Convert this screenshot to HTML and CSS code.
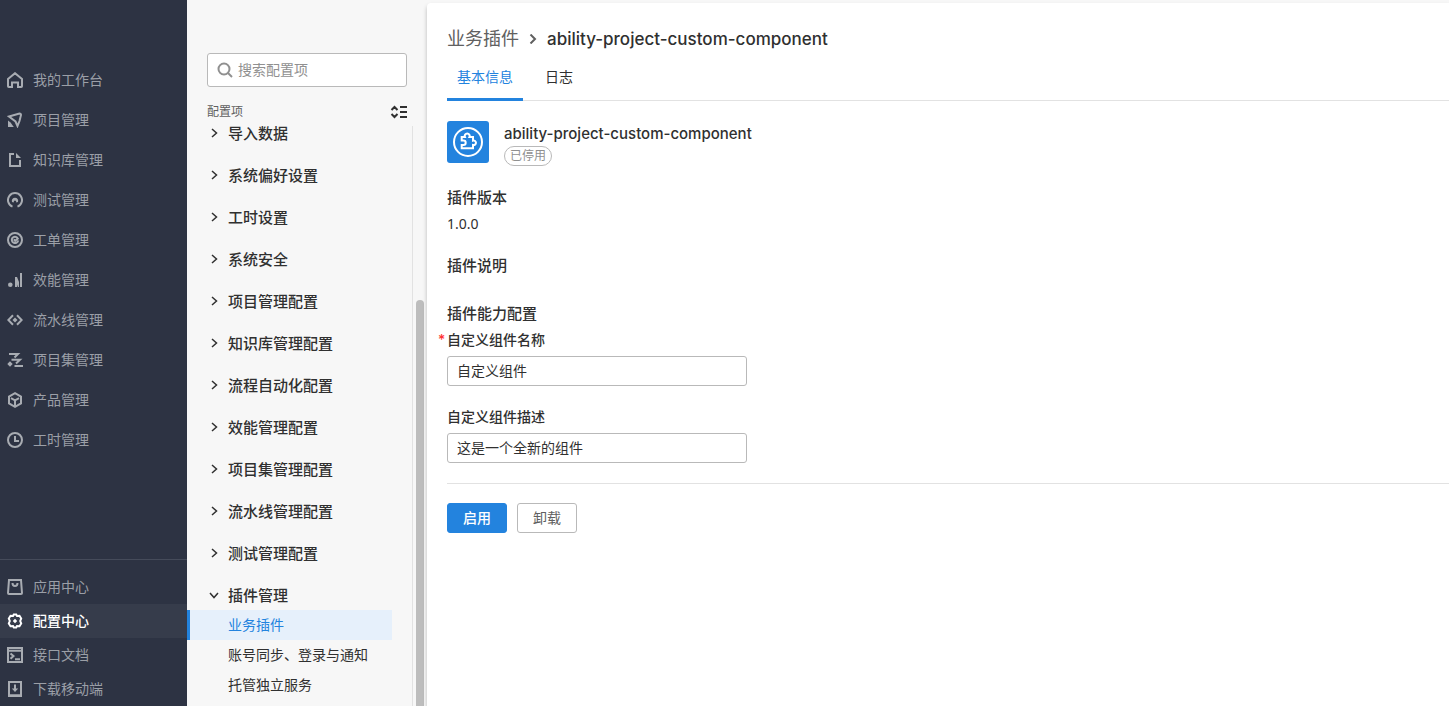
FILE: index.html
```html
<!DOCTYPE html>
<html lang="zh-CN">
<head>
<meta charset="utf-8">
<title>配置中心</title>
<link rel="stylesheet" href="styles.css">
</head>
<body>
<div class="app">
  <nav class="sidebar" aria-label="主导航">
    <div class="menu">
      <a class="menu-item" href="#"><svg class="icon" viewBox="0 0 16 16"><path d="M1 7 8 1.200 15 7v7.200q0 .8-.8.8H11v-4.500H5V15H1.800q-.8 0-.8-.8z"/></svg>我的工作台</a>
      <a class="menu-item" href="#"><svg class="icon" viewBox="0 0 16 16"><path d="M2 4.500 12.500 1.500q1.500 0 1.500 1.500L12.500 9 10.500 14 8.500 9.500z"/><path class="solid" d="M1 8.500 3.500 10.500 6.800 15H1z"/></svg>项目管理</a>
      <a class="menu-item" href="#"><svg class="icon" viewBox="0 0 16 16"><path d="M7 2H3v12h10V8"/><path class="solid" d="M9 1l5 5H9z"/></svg>知识库管理</a>
      <a class="menu-item" href="#"><svg class="icon" viewBox="0 0 16 16"><path d="M5.500 14.600a7 7 0 1 1 5 0"/><path class="solid" d="M5 10a3.200 3.200 0 1 1 6 0l-1.600.6Q9.200 8.600 8 8.600T6.600 10.600z"/></svg>测试管理</a>
      <a class="menu-item" href="#"><svg class="icon" viewBox="0 0 16 16"><circle cx="8" cy="8" r="7"/><path d="M10.500 5.800A3.200 3.200 0 1 0 11.200 8.300M6.800 7.400 8.200 8.800 11.500 6"/></svg>工单管理</a>
      <a class="menu-item" href="#"><svg class="icon" viewBox="0 0 16 16"><circle class="solid" cx="3.300" cy="12.700" r="2.300"/><path class="solid" d="M8 5h2l2 5v5h-1.200L10 12.500V15H8zM13 1h2v14h-2z"/></svg>效能管理</a>
      <a class="menu-item" href="#"><svg class="icon" viewBox="0 0 16 16"><path d="M6 3.200 1.300 8 6 12.800M10 3.200 14.700 8 10 12.800"/><path class="solid" d="M8 5.500 10.500 8 8 10.500 5.500 8z"/></svg>流水线管理</a>
      <a class="menu-item" href="#"><svg class="icon" viewBox="0 0 16 16"><path d="M2 2h9L7.500 5.500M4.500 7.700H13L9 11.500M7.500 14H16"/><path class="solid" d="M3 9.300 5.700 12 3 14.700.3 12z"/></svg>项目集管理</a>
      <a class="menu-item" href="#"><svg class="icon" viewBox="0 0 16 16"><path d="M8 1.200 14 4.500v7L8 14.800 2 11.500v-7zM4 6.200 8 8.300l4-2.100M8 8v6.500"/></svg>产品管理</a>
      <a class="menu-item" href="#"><svg class="icon" viewBox="0 0 16 16"><circle cx="8" cy="8" r="7"/><path d="M8 4v5h4"/></svg>工时管理</a>
    </div>
    <div class="menu-bottom">
      <a class="menu-item compact" href="#"><svg class="icon" viewBox="0 0 16 16"><path d="M2 1h12l1 13q0 1-1 1H2q-1 0-1-1zM5.500 4q0 3 2.500 3t2.500-3"/></svg>应用中心</a>
      <a class="menu-item compact active" href="#" aria-current="page"><svg class="icon" viewBox="0 0 16 16"><path d="m6 3 .8-1.500h2.400L10 3l2.500-.2 1.700 2.700L13.200 8l1 2.500-1.700 2.700L10 13l-.8 1.500H6.800L6 13l-2.500.2-1.700-2.700L2.800 8l-1-2.500 1.700-2.700z"/><path class="solid" d="M8 5.800 10.200 8 8 10.200 5.800 8z"/></svg>配置中心</a>
      <a class="menu-item compact" href="#"><svg class="icon" viewBox="0 0 16 16"><path d="M1 1h14v14H1zM1 3.800h14M3.500 6.500 6.500 9l-3 2.800M8 12.200h5"/></svg>接口文档</a>
      <a class="menu-item compact" href="#"><svg class="icon" viewBox="0 0 16 16"><path d="M2 1h12v14H2zM8 3.500V9M2 14.200h12"/><path class="solid" d="M4.800 7.500h6.400L8 11z"/></svg>下载移动端</a>
    </div>
  </nav>

  <aside class="config">
    <div class="config-head">
      <label class="search">
        <svg class="search-icon" viewBox="0 0 16 16"><circle cx="7" cy="7" r="5.500"/><path d="m11 11 4 4"/></svg>
        <input type="search" placeholder="搜索配置项" aria-label="搜索配置项">
      </label>
      <div class="config-label">
        <span>配置项</span>
        <button class="collapse" type="button" aria-label="全部展开或收起"><svg viewBox="0 0 18 14"><path d="M1.500 5 4.500 2l3 3M1.500 9l3 3 3-3M10 2h7M10 7h7M10 12h7"/></svg></button>
      </div>
    </div>
    <div class="config-body">
      <div class="tree">
        <button class="group" type="button"><svg class="chevron" viewBox="0 0 10 12"><path d="m3 1 4.500 4L3 9"/></svg>导入数据</button>
        <button class="group" type="button"><svg class="chevron" viewBox="0 0 10 12"><path d="m3 1 4.500 4L3 9"/></svg>系统偏好设置</button>
        <button class="group" type="button"><svg class="chevron" viewBox="0 0 10 12"><path d="m3 1 4.500 4L3 9"/></svg>工时设置</button>
        <button class="group" type="button"><svg class="chevron" viewBox="0 0 10 12"><path d="m3 1 4.500 4L3 9"/></svg>系统安全</button>
        <button class="group" type="button"><svg class="chevron" viewBox="0 0 10 12"><path d="m3 1 4.500 4L3 9"/></svg>项目管理配置</button>
        <button class="group" type="button"><svg class="chevron" viewBox="0 0 10 12"><path d="m3 1 4.500 4L3 9"/></svg>知识库管理配置</button>
        <button class="group" type="button"><svg class="chevron" viewBox="0 0 10 12"><path d="m3 1 4.500 4L3 9"/></svg>流程自动化配置</button>
        <button class="group" type="button"><svg class="chevron" viewBox="0 0 10 12"><path d="m3 1 4.500 4L3 9"/></svg>效能管理配置</button>
        <button class="group" type="button"><svg class="chevron" viewBox="0 0 10 12"><path d="m3 1 4.500 4L3 9"/></svg>项目集管理配置</button>
        <button class="group" type="button"><svg class="chevron" viewBox="0 0 10 12"><path d="m3 1 4.500 4L3 9"/></svg>流水线管理配置</button>
        <button class="group" type="button"><svg class="chevron" viewBox="0 0 10 12"><path d="m3 1 4.500 4L3 9"/></svg>测试管理配置</button>
        <div class="branch">
          <button class="group" type="button" aria-expanded="true"><svg class="chevron" viewBox="0 0 10 12"><path d="m1 3 4 4.500L9 3"/></svg>插件管理</button>
          <a class="leaf selected" href="#" aria-current="page">业务插件</a>
          <a class="leaf" href="#">账号同步、登录与通知</a>
          <a class="leaf" href="#">托管独立服务</a>
        </div>
      </div>
      <div class="scrollbar"><div class="thumb"></div></div>
    </div>
  </aside>

  <main class="content">
    <header class="crumbs">
      <a href="#">业务插件</a>
      <svg class="crumb-arrow" viewBox="0 0 10 10"><path d="m2.500.5 4.500 4.500-4.500 4.500"/></svg>
      <h1>ability-project-custom-component</h1>
    </header>
    <div class="tabs" role="tablist">
      <button class="tab current" type="button" role="tab" aria-selected="true">基本信息</button>
      <button class="tab" type="button" role="tab" aria-selected="false">日志</button>
    </div>
    <section class="plugin">
      <svg class="plugin-logo" viewBox="0 0 42 42"><rect width="42" height="42" rx="3"/><circle cx="21" cy="21" r="14"/><path d="M14.700 16h3.200a2.500 2.500 0 1 1 4.600 0H26v3.600a2.300 2.300 0 1 1 0 4.400v3.200H14.700V24h1.800a2.200 2.200 0 0 0 0-4.400h-1.800z"/></svg>
      <div>
        <h2 class="plugin-name">ability-project-custom-component</h2>
        <span class="tag">已停用</span>
      </div>
    </section>
    <section class="version"><h3>插件版本</h3><p>1.0.0</p></section>
    <section class="note"><h3>插件说明</h3></section>
    <form class="settings">
      <h3>插件能力配置</h3>
      <div class="field">
        <label for="name"><span class="required">*</span>自定义组件名称</label>
        <input id="name" type="text" value="自定义组件">
      </div>
      <div class="field">
        <label for="desc">自定义组件描述</label>
        <input id="desc" type="text" value="这是一个全新的组件">
      </div>
      <div class="actions">
        <button class="btn primary" type="button">启用</button>
        <button class="btn" type="button">卸载</button>
      </div>
    </form>
  </main>
</div>
</body>
</html>
```
FILE: styles.css
```css
* { box-sizing: border-box; }

body {
  margin: 0;
  font-family: Inter, "Noto Sans CJK SC", sans-serif;
  font-size: 14px;
  line-height: 20px;
  color: #303030;
}

button, input { font: inherit; color: inherit; }
button { padding: 0; border: 0; background: none; cursor: pointer; }
a { color: inherit; text-decoration: none; }
h1, h2, h3, p { margin: 0; }
svg { flex: none; fill: none; stroke: currentColor; }

.app {
  display: grid;
  grid-template-columns: 187px 240px minmax(0, 1fr);
  height: 100vh;
  overflow: hidden;
  background: #f7f7f7;
}

/* Main navigation */
.sidebar {
  display: flex;
  flex-direction: column;
  justify-content: space-between;
  padding-top: 60px;
  background: #2d3343;
  color: #9b9fa7;
}
.menu-item {
  display: flex;
  align-items: center;
  gap: 10px;
  height: 40px;
  padding-left: 7px;
}
.menu-item.compact { height: 34px; }
.menu-item.active { background: #363c4b; color: #fff; font-weight: 500; }
.menu-bottom { padding-top: 10px; border-top: 1px solid #454b5a; }
.icon { width: 16px; height: 16px; stroke: #a8acb2; stroke-width: 2; }
.icon .solid { fill: #a8acb2; stroke: none; }
.active .icon { stroke: #fff; }
.active .icon .solid { fill: #fff; }

/* Configuration tree */
.config { display: flex; flex-direction: column; min-height: 0; }
.config-head { padding: 53px 20px 0; }
.search {
  display: flex;
  align-items: center;
  gap: 5px;
  height: 34px;
  padding: 0 9px;
  border: 1px solid #b9b9b9;
  border-radius: 3px;
  background: #fff;
}
.search-icon { width: 16px; height: 16px; color: #909090; stroke-width: 2; }
.search input { flex: 1; min-width: 0; padding: 0; border: 0; outline: 0; background: none; }
.search input::placeholder { color: #909090; opacity: 1; }
.config-label {
  display: flex;
  align-items: center;
  justify-content: space-between;
  height: 39px;
  padding-top: 11px;
  font-size: 12px;
  color: #606060;
}
.collapse { display: flex; margin-right: -1px; color: #303030; }
.collapse svg { width: 18px; height: 14px; stroke-width: 2; }
.config-body { display: flex; flex: 1; min-height: 0; overflow: hidden; }
.tree {
  display: flex;
  flex: 1;
  flex-direction: column;
  gap: 12px;
  margin-top: -8px;
}
.group {
  display: flex;
  flex: none;
  align-items: center;
  gap: 9px;
  width: 100%;
  height: 30px;
  padding: 2px 0 0 22px;
  font-size: 15px;
  font-weight: 500;
  line-height: 16px;
}
.chevron { width: 10px; height: 12px; stroke-width: 1.5; }
.leaf { display: block; margin-right: 20px; padding: 5px 0 5px 41px; }
.leaf.selected {
  padding-left: 38px;
  border-left: 3px solid #2383de;
  background: #e6f0fb;
  color: #2383de;
}
.scrollbar {
  display: flex;
  align-items: flex-end;
  width: 15px;
  padding-left: 3px;
  border-left: 1px solid #e2e2e2;
}
.thumb { width: 8px; height: 70%; border-radius: 4px 4px 0 0; background: #bdbdbd; }

/* Plugin details */
.content {
  margin-top: 3px;
  padding: 22px 0 20px 20px;
  border-radius: 4px 0 0 0;
  background: #fff;
  box-shadow: 0 3px 4px rgba(0, 0, 0, .25);
}
.crumbs {
  display: flex;
  align-items: center;
  gap: 9px;
  font-size: 18px;
  line-height: 28px;
  color: #606060;
}
.crumbs h1 { font-size: 17px; font-weight: 500; color: #303030; }
.crumb-arrow { width: 10px; height: 10px; stroke-width: 2; }
.tabs { display: flex; gap: 12px; height: 48px; border-bottom: 1px solid #e2e2e2; }
.tab { height: 48px; padding: 2px 10px 0; border-bottom: 3px solid transparent; }
.tab.current { border-color: #2383de; color: #2383de; }
.plugin { display: flex; gap: 15px; padding: 20px 0; }
.plugin-logo { width: 42px; height: 42px; stroke: #fff; stroke-width: 2; }
.plugin-logo rect { fill: #2383de; stroke: none; }
.plugin-name { font-size: 15px; font-weight: 500; line-height: 25px; }
.tag {
  display: block;
  width: fit-content;
  padding: 0 5px;
  border: 1px solid #b9b9b9;
  border-radius: 10px;
  font-size: 12px;
  line-height: 18px;
  color: #909090;
}
h3 { font-size: 15px; font-weight: 500; line-height: 24px; }
.version p { padding: 4px 0 20px; font-family: "Noto Sans", sans-serif; }
.note { padding-bottom: 24px; }
.settings h3 { padding-bottom: 3px; }
.field { display: flex; flex-direction: column; padding-bottom: 20px; }
.field label {
  display: flex;
  position: relative;
  padding-bottom: 6px;
  font-weight: 500;
  line-height: 21px;
}
.required { position: absolute; left: -9px; color: #f33; }
.field input {
  width: 300px;
  height: 30px;
  padding: 0 9px 2px;
  border: 1px solid #b9b9b9;
  border-radius: 3px;
  background: #fff;
}
.actions { display: flex; gap: 10px; padding-top: 19px; border-top: 1px solid #e2e2e2; }
.btn {
  width: 60px;
  height: 30px;
  border: 1px solid #b9b9b9;
  border-radius: 3px;
  color: #606060;
}
.btn.primary { border-color: #2383de; background: #2383de; color: #fff; font-weight: 500; }
```
